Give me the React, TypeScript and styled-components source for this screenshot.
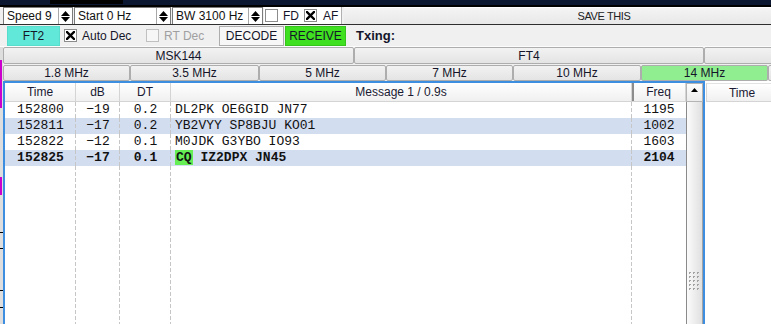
import React from 'react';
import styled, { createGlobalStyle } from 'styled-components';

const Global = createGlobalStyle`
  html, body { margin: 0; padding: 0; background: #f0f0f0; overflow: hidden; }
  body { font-family: "Liberation Sans", Arial, sans-serif; font-size: 12px; color: #111; }
  #root { width: 771px; height: 324px; overflow: hidden; }
`;

const Page = styled.div`
  width: 771px;
  height: 324px;
  display: flex;
  flex-direction: column;
  overflow: hidden;
  background: #f0f0f0;
`;

const TitleStrip = styled.div`
  height: 5px;
  flex-shrink: 0;
  background: #0b1631;
  border-bottom: 2px solid #000;
  display: flex;
`;

const TitleShade = styled.div`
  margin-left: 50px;
  width: 73px;
  height: 4px;
  background: #000;
`;

const Row1 = styled.div`
  display: flex;
  flex-shrink: 0;
  height: 17px;
  padding-left: 3px;
  gap: 1px;
  border-bottom: 1px solid #2e2e2e;
`;

const Spin = styled.div<{ $w: number }>`
  width: ${p => p.$w}px;
  flex-shrink: 0;
  box-sizing: border-box;
  display: flex;
  background: #fff;
  border: 1px solid #7a7a7a;
  border-bottom: none;
`;

const SpinText = styled.div`
  flex: 1;
  padding-left: 3px;
  line-height: 16px;
  font-size: 12px;
  color: #111;
  white-space: nowrap;
  overflow: hidden;
`;

const SpinArrows = styled.div`
  width: 14px;
  border-left: 1px solid #a8a8a8;
  display: flex;
  flex-direction: column;
  align-items: center;
  justify-content: space-around;
  padding: 2px 0 1px;
  box-sizing: border-box;
`;

const CheckGroup = styled.div`
  width: 78px;
  flex-shrink: 0;
  background: #fff;
  border-right: 1px solid #b0b0b0;
  display: flex;
  align-items: center;
  padding-left: 1px;
  box-sizing: border-box;
`;

const CheckItem = styled.div<{ $w?: number; $gap?: number; $ml?: number }>`
  display: flex;
  align-items: center;
  gap: ${p => p.$gap ?? 5}px;
  ${p => (p.$w ? `width: ${p.$w}px;` : '')}
  margin-left: ${p => p.$ml ?? 0}px;
  flex-shrink: 0;
  font-size: 12px;
  white-space: nowrap;
`;

const Label = styled.span<{ $disabled?: boolean }>`
  color: ${p => (p.$disabled ? '#a0a0a0' : '#15152a')};
`;

const Box = styled.span<{ $disabled?: boolean }>`
  width: 13px;
  height: 13px;
  box-sizing: border-box;
  flex-shrink: 0;
  border: 1px solid ${p => (p.$disabled ? '#c0c0c0' : '#8c8c8c')};
  background: ${p => (p.$disabled ? '#f6f6f6' : '#fff')};
  display: inline-flex;
  align-items: center;
  justify-content: center;
`;

const SaveButton = styled.div`
  width: 520px;
  flex-shrink: 0;
  margin-left: 1px;
  background: linear-gradient(#f4f4f4, #e8e8e8);
  border-top: 1px solid #ffffff;
  box-sizing: border-box;
  text-align: center;
  line-height: 16px;
  font-size: 11px;
  letter-spacing: -0.4px;
  color: #222;
`;

const Row2 = styled.div`
  display: flex;
  align-items: center;
  flex-shrink: 0;
  height: 21px;
  padding-left: 7px;
  border-bottom: 1px solid #fcfcfc;
`;

const ColorButton = styled.div<{ $bg: string; $border: string; $w: number; $ml?: number }>`
  width: ${p => p.$w}px;
  height: 20px;
  margin-left: ${p => p.$ml ?? 0}px;
  box-sizing: border-box;
  flex-shrink: 0;
  background: ${p => p.$bg};
  border: 1px solid ${p => p.$border};
  display: flex;
  align-items: center;
  justify-content: center;
  font-size: 12px;
  color: #15152a;
`;

const TxLabel = styled.span`
  margin-left: 10px;
  font-size: 13px;
  font-weight: 700;
  color: #15152a;
`;

const Main = styled.div`
  flex: 1;
  display: flex;
  min-height: 0;
`;

const LeftStrip = styled.div`
  width: 3px;
  flex-shrink: 0;
  background:
    linear-gradient(#000, #000) 0 185px / 3px 1px no-repeat,
    linear-gradient(#000, #000) 0 201px / 3px 1px no-repeat,
    linear-gradient(#000, #000) 0 243px / 3px 1px no-repeat,
    linear-gradient(#000, #000) 0 260px / 3px 1px no-repeat,
    linear-gradient(#cc00cc, #cc00cc) 0 13px / 2px 48px no-repeat,
    linear-gradient(#cc00cc, #cc00cc) 0 130px / 2px 18px no-repeat,
    #dedede;
`;

const MainCol = styled.div`
  flex: 1;
  display: flex;
  flex-direction: column;
  min-width: 0;
`;

const ButtonRow = styled.div<{ $h: number; $top: number }>`
  display: flex;
  flex-shrink: 0;
  height: ${p => p.$h}px;
  margin-top: ${p => p.$top}px;
`;

const PushButton = styled.div<{ $w: number; $active?: boolean }>`
  width: ${p => p.$w}px;
  flex-shrink: 0;
  box-sizing: border-box;
  border: 1px solid #adadad;
  border-radius: 2px;
  background: ${p => (p.$active ? '#90ee90' : 'linear-gradient(#f2f2f2, #e4e4e4)')};
  display: flex;
  align-items: center;
  justify-content: center;
  font-size: 12px;
  color: #15152a;
  white-space: nowrap;
`;

const Tables = styled.div`
  flex: 1;
  display: flex;
  min-height: 0;
`;

const Frame = styled.div`
  width: 702px;
  flex-shrink: 0;
  box-sizing: border-box;
  border: 2px solid #3d8ee0;
  border-bottom: none;
  display: flex;
  flex-direction: column;
  background: #fff;
`;

const HeaderRow = styled.div`
  display: flex;
  height: 19px;
  flex-shrink: 0;
`;

const HeadCell = styled.div<{ $w: number; $sorted?: boolean }>`
  width: ${p => p.$w}px;
  flex-shrink: 0;
  box-sizing: border-box;
  border-right: 1px solid #d4d4d4;
  border-bottom: 1px solid #d4d4d4;
  background: linear-gradient(#ffffff, #f0f0f0);
  ${p => (p.$sorted ? 'box-shadow: inset 2px 0 0 #8c8c8c;' : '')}
  display: flex;
  align-items: center;
  justify-content: center;
  font-size: 12px;
  color: #1a1a33;
  white-space: nowrap;
`;

const ScrollHead = styled.div`
  width: 17px;
  flex-shrink: 0;
  box-sizing: border-box;
  border: 1px solid #b4b4b4;
  background: linear-gradient(#fdfdfd, #ececec);
  display: flex;
  justify-content: center;
  padding-top: 4px;
`;

const Body = styled.div`
  flex: 1;
  display: flex;
  min-height: 0;
`;

const Rows = styled.div`
  flex: 1;
  display: flex;
  flex-direction: column;
`;

const DataRow = styled.div<{ $alt?: boolean; $bold?: boolean }>`
  display: flex;
  height: 16px;
  flex-shrink: 0;
  background: ${p => (p.$alt ? '#d3ddf0' : 'transparent')};
  font-weight: ${p => (p.$bold ? 700 : 400)};
`;

const FillRow = styled.div`
  display: flex;
  flex: 1;
`;

const Cell = styled.div<{ $w: number; $left?: boolean; $last?: boolean }>`
  width: ${p => p.$w}px;
  flex-shrink: 0;
  box-sizing: border-box;
  text-align: ${p => (p.$left ? 'left' : 'center')};
  padding-left: ${p => (p.$left ? 4 : 0)}px;
  font-family: "Liberation Mono", "Courier New", monospace;
  font-size: 13px;
  line-height: 16px;
  color: #111;
  white-space: nowrap;
  overflow: hidden;
  background-image: ${p =>
    p.$last ? 'none' : 'linear-gradient(#c6c6c6 0 4px, transparent 4px 6px)'};
  background-size: 1px 6px;
  background-repeat: repeat-y;
  background-position: right top;
`;

const Cq = styled.span`
  background: #66ee55;
  padding: 1px 1px 0;
`;

const ScrollTrack = styled.div`
  width: 17px;
  flex-shrink: 0;
  box-sizing: border-box;
  border-left: 1px solid #8a8a8a;
  border-right: 1px solid #a4a4a4;
  background: linear-gradient(to right, #fbfbfb, #e0e0e0);
  display: flex;
  justify-content: center;
  padding-top: 170px;
`;

const RightPanel = styled.div`
  flex: 1;
  background: #fff;
  padding: 2px 0 0 1px;
  min-width: 0;
  overflow: hidden;
`;

const RightHead = styled.div`
  width: 72px;
  height: 19px;
  box-sizing: border-box;
  border: 1px solid #d4d4d4;
  border-top-color: #e2e2e2;
  background: linear-gradient(#ffffff, #f0f0f0);
  display: flex;
  align-items: center;
  justify-content: center;
  font-size: 12px;
  color: #1a1a33;
`;

const UpArrow = ({ w = 9, h = 5 }: { w?: number; h?: number }) => (
  <svg width={w} height={h} viewBox={`0 0 ${w} ${h}`}>
    <path d={`M0 ${h} L${w / 2} 0 L${w} ${h} Z`} fill="#000" />
  </svg>
);

const DownArrow = ({ w = 9, h = 5 }: { w?: number; h?: number }) => (
  <svg width={w} height={h} viewBox={`0 0 ${w} ${h}`}>
    <path d={`M0 0 L${w / 2} ${h} L${w} 0 Z`} fill="#000" />
  </svg>
);

const Cross = () => (
  <svg width="9" height="9" viewBox="0 0 9 9">
    <path d="M1 1 L8 8 M8 1 L1 8" stroke="#000" strokeWidth="2.4" strokeLinecap="square" />
  </svg>
);

const Gripper = () => (
  <svg width="11" height="19" viewBox="0 0 11 19">
    {[0, 1, 2].map(c =>
      [0, 1, 2, 3, 4].map(r => (
        <g key={`${c}-${r}`} fill="#a2a2a2">
          <rect x={c * 4} y={r * 4} width="2" height="1" />
          <rect x={c * 4} y={r * 4 + 1} width="1" height="1" />
        </g>
      ))
    )}
  </svg>
);

const SpinBox = ({ w, text }: { w: number; text: string }) => (
  <Spin $w={w}>
    <SpinText>{text}</SpinText>
    <SpinArrows>
      <UpArrow />
      <DownArrow />
    </SpinArrows>
  </Spin>
);

const Check = ({
  label,
  checked,
  disabled,
  w,
  gap,
  ml,
}: {
  label: string;
  checked?: boolean;
  disabled?: boolean;
  w?: number;
  gap?: number;
  ml?: number;
}) => (
  <CheckItem $w={w} $gap={gap} $ml={ml}>
    <Box $disabled={disabled}>{checked ? <Cross /> : null}</Box>
    <Label $disabled={disabled}>{label}</Label>
  </CheckItem>
);

const COLS = [71, 44, 51, 461, 54];

type Decode = {
  time: string;
  db: string;
  dt: string;
  msg: string;
  freq: string;
  cq?: boolean;
};

const decodes: Decode[] = [
  { time: '152800', db: '\u221219', dt: '0.2', msg: 'DL2PK OE6GID JN77', freq: '1195' },
  { time: '152811', db: '\u221217', dt: '0.2', msg: 'YB2VYY SP8BJU KO01', freq: '1002' },
  { time: '152822', db: '\u221212', dt: '0.1', msg: 'M0JDK G3YBO IO93', freq: '1603' },
  { time: '152825', db: '\u221217', dt: '0.1', msg: 'IZ2DPX JN45', freq: '2104', cq: true },
];

const bands: { label: string; w: number; active?: boolean }[] = [
  { label: '1.8 MHz', w: 127 },
  { label: '3.5 MHz', w: 129 },
  { label: '5 MHz', w: 127 },
  { label: '7 MHz', w: 127 },
  { label: '10 MHz', w: 128 },
  { label: '14 MHz', w: 127, active: true },
  { label: '', w: 127 },
];

export default function App() {
  return (
    <>
      <Global />
      <Page>
        <TitleStrip>
          <TitleShade />
        </TitleStrip>
        <Row1>
          <SpinBox w={70} text="Speed 9" />
          <SpinBox w={97} text="Start 0 Hz" />
          <SpinBox w={91} text="BW 3100 Hz" />
          <CheckGroup>
            <Check label="FD" w={39} gap={5} />
            <Check label="AF" checked gap={6} />
          </CheckGroup>
          <SaveButton>SAVE THIS</SaveButton>
        </Row1>
        <Row2>
          <ColorButton $bg="#62e8d8" $border="#58dccc" $w={53}>
            FT2
          </ColorButton>
          <Check label="Auto Dec" checked w={82} gap={5} ml={4} />
          <Check label="RT Dec" disabled w={73} gap={5} />
          <ColorButton $bg="#f7f7f7" $border="#adadad" $w={65}>
            DECODE
          </ColorButton>
          <ColorButton $bg="#3ee01f" $border="#36c41c" $w={61} $ml={1}>
            RECEIVE
          </ColorButton>
          <TxLabel>Txing:</TxLabel>
        </Row2>
        <Main>
          <LeftStrip />
          <MainCol>
            <ButtonRow $h={17} $top={0}>
              <PushButton $w={351}>MSK144</PushButton>
              <PushButton $w={350}>FT4</PushButton>
              <PushButton $w={350} />
            </ButtonRow>
            <ButtonRow $h={16} $top={1}>
              {bands.map((b, i) => (
                <PushButton key={i} $w={b.w} $active={b.active}>
                  {b.label}
                </PushButton>
              ))}
            </ButtonRow>
            <Tables>
              <Frame>
                <HeaderRow>
                  <HeadCell $w={COLS[0]}>Time</HeadCell>
                  <HeadCell $w={COLS[1]}>dB</HeadCell>
                  <HeadCell $w={COLS[2]}>DT</HeadCell>
                  <HeadCell $w={COLS[3]}>Message 1 / 0.9s</HeadCell>
                  <HeadCell $w={COLS[4]} $sorted>
                    Freq
                  </HeadCell>
                  <ScrollHead>
                    <UpArrow w={7} h={4} />
                  </ScrollHead>
                </HeaderRow>
                <Body>
                  <Rows>
                    {decodes.map((d, i) => (
                      <DataRow key={d.time} $alt={i % 2 === 1} $bold={!!d.cq}>
                        <Cell $w={COLS[0]}>{d.time}</Cell>
                        <Cell $w={COLS[1]}>{d.db}</Cell>
                        <Cell $w={COLS[2]}>{d.dt}</Cell>
                        <Cell $w={COLS[3]} $left>
                          {d.cq ? (
                            <>
                              <Cq>CQ</Cq> {d.msg}
                            </>
                          ) : (
                            d.msg
                          )}
                        </Cell>
                        <Cell $w={COLS[4]} $last>
                          {d.freq}
                        </Cell>
                      </DataRow>
                    ))}
                    <FillRow>
                      <Cell $w={COLS[0]} />
                      <Cell $w={COLS[1]} />
                      <Cell $w={COLS[2]} />
                      <Cell $w={COLS[3]} />
                      <Cell $w={COLS[4]} $last />
                    </FillRow>
                  </Rows>
                  <ScrollTrack>
                    <Gripper />
                  </ScrollTrack>
                </Body>
              </Frame>
              <RightPanel>
                <RightHead>Time</RightHead>
              </RightPanel>
            </Tables>
          </MainCol>
        </Main>
      </Page>
    </>
  );
}
